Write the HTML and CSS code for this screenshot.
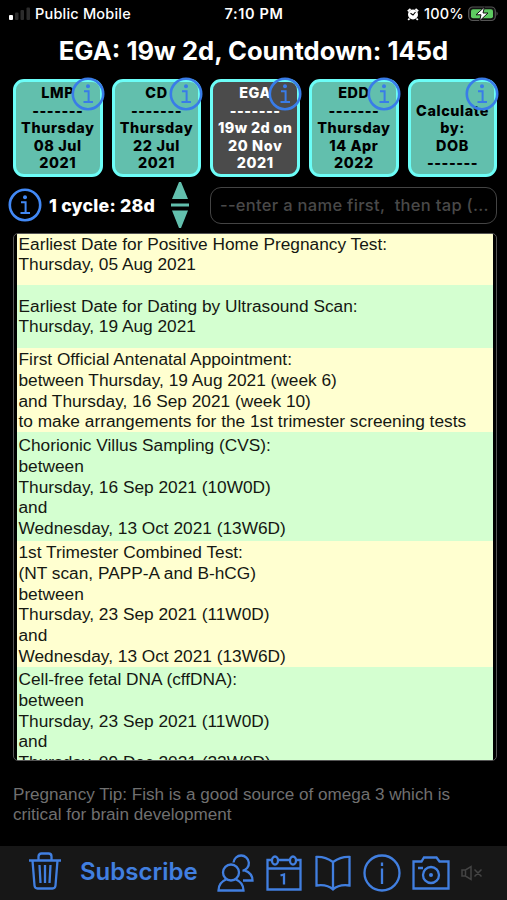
FILE: index.html
```html
<!DOCTYPE html>
<html lang="en">
<head>
<meta charset="utf-8">
<title>Pregnancy Calculator</title>
<link rel="stylesheet" href="styles.css">
</head>
<body>
<svg class="defs" width="0" height="0">
  <symbol id="info" viewBox="0 0 34 34">
    <circle cx="17" cy="17" r="15.2" fill="none" stroke="currentColor" stroke-width="2.6"/>
    <circle cx="17" cy="9.2" r="2" fill="currentColor"/>
    <path d="M13 14.2H17.6V25M12.5 25H22" fill="none" stroke="currentColor" stroke-width="2"/>
  </symbol>
</svg>
<header class="status">
  <svg class="signal" width="22" height="14" viewBox="0 0 22 14"><rect x="0" y="9" width="4" height="5" rx="1" fill="#fff"/><rect x="6" y="6.500" width="3.500" height="7.500" rx="1" fill="#2c2c2c"/><rect x="11.500" y="4" width="3.500" height="10" rx="1" fill="#2c2c2c"/><rect x="17.500" y="1.500" width="3.500" height="12.500" rx="1" fill="#2c2c2c"/></svg>
  <span class="carrier">Public Mobile</span>
  <span class="time">7:10 PM</span>
  <span class="power">
    <svg width="12" height="13" viewBox="0 0 12 13"><circle cx="6" cy="6.500" r="5" fill="#fff"/><path d="M.8 3.200L3.500.9M11.200 3.200L8.500.9M2.500 10.500L1.200 12M9.500 10.500L10.800 12" stroke="#fff" stroke-width="1.800"/><path d="M3.500 5.200L6 7L8.500 4" fill="none" stroke="#000" stroke-width="1.100"/></svg>
    <span class="percent">100%</span>
    <svg width="31" height="16" viewBox="0 0 31 16"><rect x=".7" y="1" width="26.600" height="13.500" rx="4" fill="#111" stroke="#555" stroke-width="1.200"/><rect x="3" y="3.200" width="22" height="9" rx="2" fill="#5ecb61"/><path d="M28.500 5.500q2.500 2 0 4.500z" fill="#555"/><path d="M16.500 1L8 8.800h5L11.500 15L20 7h-5z" fill="#fff" stroke="#111" stroke-width="1"/></svg>
  </span>
</header>
<h1>EGA: 19w 2d, Countdown: 145d</h1>
<section class="cards">
  <div class="card"><span>LMP</span><span class="dash">-------</span><span>Thursday</span><span>08 Jul</span><span>2021</span><svg class="badge"><use href="#info"/></svg></div>
  <div class="card"><span>CD</span><span class="dash">-------</span><span>Thursday</span><span>22 Jul</span><span>2021</span><svg class="badge"><use href="#info"/></svg></div>
  <div class="card selected"><span>EGA</span><span class="dash">-------</span><span class="tight">19w 2d on</span><span>20 Nov</span><span>2021</span><svg class="badge"><use href="#info"/></svg></div>
  <div class="card"><span>EDD</span><span class="dash">-------</span><span>Thursday</span><span>14 Apr</span><span>2022</span><svg class="badge"><use href="#info"/></svg></div>
  <div class="card"><span>Calculate</span><span>by:</span><span>DOB</span><span class="dash">-------</span><svg class="badge"><use href="#info"/></svg></div>
</section>
<section class="controls">
  <svg class="cycle-info"><use href="#info"/></svg>
  <span class="cycle">1 cycle: 28d</span>
  <svg class="stepper" width="18" height="46" viewBox="0 0 18 46"><path d="M8 0H10L17 17H1zM8 46H10L17 28.500H1zM0 21.500h18v3H0z" fill="#62bfad"/></svg>
  <div class="name">--enter a name first,&nbsp; then tap (...</div>
</section>
<main class="list">
  <p class="r1">Earliest Date for Positive Home Pregnancy Test:<br>Thursday, 05 Aug 2021</p>
  <p class="r2">Earliest Date for Dating by Ultrasound Scan:<br>Thursday, 19 Aug 2021</p>
  <p class="r3">First Official Antenatal Appointment:<br>between Thursday, 19 Aug 2021 (week 6)<br>and Thursday, 16 Sep 2021 (week 10)<br>to make arrangements for the 1st trimester screening tests</p>
  <p class="r4">Chorionic Villus Sampling (CVS):<br>between<br>Thursday, 16 Sep 2021 (10W0D)<br>and<br>Wednesday, 13 Oct 2021 (13W6D)</p>
  <p class="r5">1st Trimester Combined Test:<br>(NT scan, PAPP-A and B-hCG)<br>between<br>Thursday, 23 Sep 2021 (11W0D)<br>and<br>Wednesday, 13 Oct 2021 (13W6D)</p>
  <p class="r6">Cell-free fetal DNA (cffDNA):<br>between<br>Thursday, 23 Sep 2021 (11W0D)<br>and<br>Thursday, 09 Dec 2021 (22W0D)</p>
</main>
<p class="tip">Pregnancy Tip: Fish is a good source of omega 3 which is<br>critical for brain development</p>
<nav class="toolbar">
  <svg class="trash" width="32" height="38" viewBox="0 0 32 38"><path d="M0 8.500H32M9.500 8V4.500Q9.500 1.500 12.500 1.500H19.500Q22.500 1.500 22.500 4.500V8M3.500 8.500L5.500 33.500Q5.800 36.500 8.500 36.500H23.500Q26.200 36.500 26.500 33.500L28.500 8.500M10.500 13L11.500 31M16 13V31M21.500 13L20.500 31"/></svg>
  <span class="subscribe">Subscribe</span>
  <svg class="people" width="37" height="38" viewBox="0 0 37 38"><circle cx="14" cy="18.500" r="8"/><path d="M9.500 25.300Q1.500 28.500 1.500 36.500H26.500Q26.500 28.500 18.500 25.300M16.500 8.500A7.700 7.700 0 1 1 25.500 16.800M27.500 16.300Q35.500 19 35.500 26.500H26"/></svg>
  <svg class="calendar" width="36" height="36" viewBox="0 0 36 36"><path d="M6 5H1.500V34.500H34.500V5H30M12 5H24M1.500 13.500H34.500"/><ellipse cx="9" cy="5.500" rx="3" ry="4"/><ellipse cx="27" cy="5.500" rx="3" ry="4"/><path d="M14.500 20.500L18 19.500V29.500"/></svg>
  <svg class="book" width="36" height="36" viewBox="0 0 36 36"><path d="M18 7Q10 1.500 1.500 2V30.500Q12 29 18 34.500Q24 29 34.500 30.500V2Q26 1.500 18 7V34"/></svg>
  <svg class="about" width="38" height="38" viewBox="0 0 38 38"><circle cx="19" cy="19" r="17.500"/><path d="M19 8.500V12M19 14.500V30"/></svg>
  <svg class="camera" width="38" height="34" viewBox="0 0 38 34"><path d="M1.500 5.500H9.500L12 1.500H24.500L27.500 5.500H36.500V32.500H1.500ZM6 12H11"/><circle cx="19" cy="19" r="8"/><circle cx="19" cy="19" r="2" fill="currentColor" stroke="none"/></svg>
  <svg class="mute" width="22" height="16" viewBox="0 0 22 16"><path d="M1 5H4.500L10 1.500V14.500L4.500 11H1ZM4.500 5V11M13.500 4.500L20.500 11.500M20.500 4.500L13.500 11.500"/></svg>
</nav>
</body>
</html>
```
FILE: styles.css
```css
* { box-sizing: border-box; }
html { background: #000; }
body { margin: 0; width: 507px; height: 900px; overflow: hidden; background: #000; color: #fff; font-family: Inter, "Liberation Sans", sans-serif; display: flex; flex-direction: column; }
.defs { position: absolute; }
.status { height: 28px; flex: none; display: grid; grid-template-columns: 26px 1fr auto 1fr; align-items: center; padding: 0 8px 0 9px; font-size: 14.5px; line-height: 28px; font-weight: 500; letter-spacing: .2px; }
.signal { margin-top: -2px; }
.time { font-weight: 600; margin-left: -26px; letter-spacing: .6px; }
.power { display: flex; align-items: center; justify-content: flex-end; gap: 5px; margin-left: -20px; }
.percent { width: 39px; letter-spacing: .2px; }
h1 { margin: 0; height: 47px; flex: none; line-height: 45px; font-size: 25.6px; font-weight: 700; text-align: center; white-space: nowrap; }
.cards { flex: none; height: 102px; padding: 4px 9px 0 13px; display: grid; grid-template-columns: repeat(5, 89.6px); gap: 9.1px; }
.card { position: relative; height: 98px; border: 3px solid #6cfdf7; border-radius: 11px; background: #62bfad; color: #000; display: flex; flex-direction: column; justify-content: center; align-items: center; font-size: 14.4px; line-height: 17.4px; font-weight: 800; letter-spacing: .6px; white-space: nowrap; }
.card:last-child { padding-top: 17px; }
.selected { background: #4b4b4b; color: #fff; }
.tight { letter-spacing: .35px; }
.dash { letter-spacing: .5px; }
.badge { position: absolute; right: -5px; top: -5px; width: 34px; height: 34px; color: #397ce8; }
.controls { flex: none; height: 56px; display: flex; align-items: center; padding-left: 8px; }
.cycle-info { width: 34px; height: 34px; color: #4289f6; }
.cycle { width: 122px; margin-left: 7px; font-size: 17.8px; font-weight: 800; letter-spacing: .2px; white-space: nowrap; }
.stepper { flex: none; }
.name { width: 287px; height: 37px; margin-left: 21px; border: 1px solid #444; border-radius: 11px; padding-left: 9px; line-height: 35px; font-size: 16.5px; font-weight: 500; letter-spacing: .3px; color: #494949; white-space: nowrap; }
.list { flex: none; height: 528px; margin: 0 10px 0 13px; border: 1px solid #555; border-radius: 5px; padding: 0 3px; overflow: hidden; color: #151812; font: 17.3px/20.8px "Liberation Sans", sans-serif; }
.list p { margin: 0; padding-left: 1.5px; background: #d4ffd0; white-space: nowrap; }
.list p:nth-child(odd) { background: #ffffd0; }
.list .r1 { height: 51px; line-height: 20.4px; }
.list .r2 { height: 63px; padding-top: 10.5px; }
.list .r3 { height: 84px; padding-top: 1px; }
.list .r4 { height: 109px; padding-top: 3px; }
.list .r5 { height: 126px; padding-top: 1px; }
.list .r6 { height: 110px; padding-top: 2px; }
.tip { flex: none; height: 85px; margin: 0; padding: 23.5px 0 0 13px; color: #707070; font: 17.1px/20px "Liberation Sans", sans-serif; white-space: nowrap; }
.toolbar { flex: none; height: 54px; background: #171717; color: #417fe0; display: flex; align-items: center; padding-left: 29px; }
.toolbar svg { flex: none; fill: none; stroke: currentColor; stroke-width: 2.3; }
.trash { margin-top: -5px; }
.subscribe { width: 118px; margin: -3px 19px 0; font-size: 24px; font-weight: 600; }
.calendar { margin-left: 12px; }
.book { margin-left: 13px; }
.about { margin-left: 12px; }
.camera { margin-left: 11px; }
.toolbar .mute { margin-left: 11px; color: #444; stroke-width: 1.5; }
```
